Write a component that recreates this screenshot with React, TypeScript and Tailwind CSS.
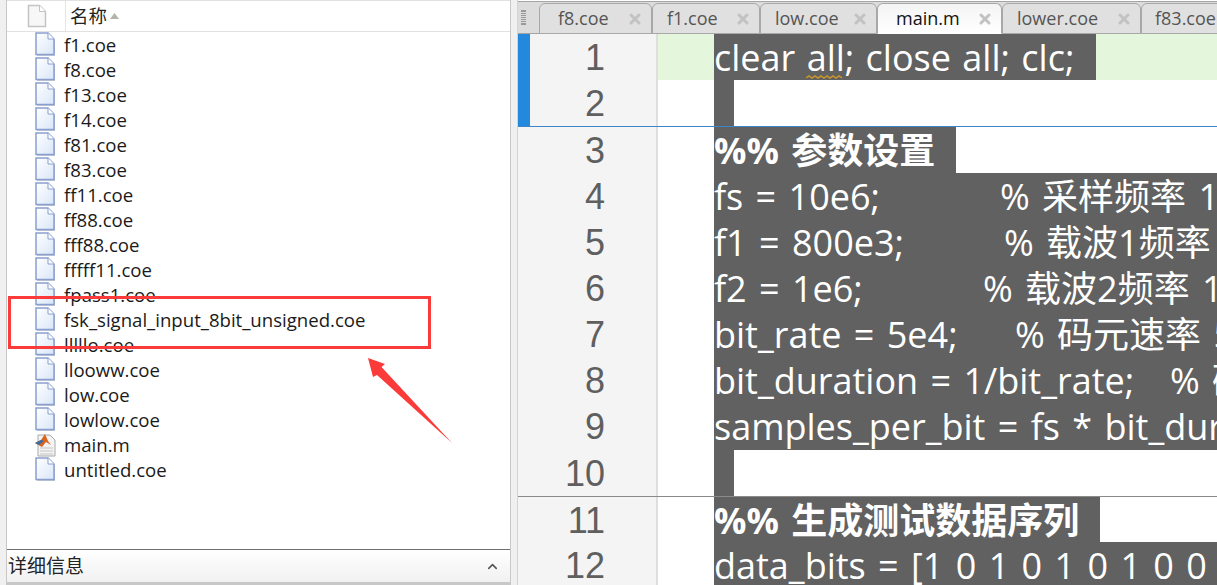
import React from "react";
import { ChevronUp, X } from "lucide-react";

const files = [
  "f1.coe", "f8.coe", "f13.coe", "f14.coe", "f81.coe", "f83.coe", "ff11.coe", "ff88.coe", "fff88.coe",
  "fffff11.coe", "fpass1.coe", "fsk_signal_input_8bit_unsigned.coe", "lllllo.coe", "llooww.coe",
  "low.coe", "lowlow.coe", "main.m", "untitled.coe",
];

const tabs = [
  { name: "f8.coe", width: "w-[113px] pl-[18px]" },
  { name: "f1.coe", width: "w-[108px] pl-[14px]" },
  { name: "low.coe", width: "w-[117px] pl-[14px]" },
  { name: "main.m", width: "w-[125px] pl-[18px]", active: true },
  { name: "lower.coe", width: "w-[139px] pl-[14px]" },
  { name: "f83.coe", width: "w-[120px] pl-[13px]" },
];

const CJK = "font-['Open_Sans','Noto_Sans_CJK_SC',sans-serif]";

function CoeIcon() {
  return (
    <svg width="24" height="25" viewBox="0 0 24 25" className="shrink-0">
      <path d="M3 2h12l6 6v16H3z" fill="#9aa3b8" opacity="0.6" />
      <path d="M2 1h12l6 6v15.500H2z" fill="url(#pg)" stroke="#8a9fd0" strokeWidth="1.500" />
      <path d="M14 1v6h6" fill="#fff" stroke="#8a9fd0" />
      <defs>
        <linearGradient id="pg" x1="0" y1="0" x2="1" y2="1">
          <stop offset="0" stopColor="#ffffff" />
          <stop offset="1" stopColor="#d8e6f8" />
        </linearGradient>
      </defs>
    </svg>
  );
}

function MatlabIcon() {
  return (
    <svg width="24" height="25" viewBox="0 0 24 25" className="shrink-0">
      <path d="M4 3h12l5 5v16H4z" fill="#f4f4f4" stroke="#a8a8a8" />
      <path d="M6 16h13M6 19h13M6 22h13" stroke="#c4c4c4" />
      <path d="M1 11l6-3 4-6 3 7 3 4-5-3-4 5z" fill="#d9641e" />
      <path d="M1 11l6-3 3 1-5 4z" fill="#3a6ea5" />
    </svg>
  );
}

function Explorer() {
  return (
    <div className="w-[505px] h-full flex flex-col bg-white border-x border-[#c8c8c8]">
      <div className="h-[32px] flex items-stretch border-t border-b border-[#e2e2e2] shrink-0">
        <div className="w-[59px] flex items-center justify-end pr-[18px] border-r border-[#e5e5e5]">
          <svg width="20" height="24" viewBox="0 0 20 24">
            <path d="M1.500 1.500h11l6 6v15h-17z" fill="#f7f7f7" stroke="#c4c4c4" strokeWidth="1.500" />
            <path d="M12.500 1.500v6h6" fill="#fff" stroke="#c4c4c4" />
          </svg>
        </div>
        <div className={`flex items-center pl-[4px] gap-[3px] text-[18.500px] text-[#222] ${CJK}`}>
          名称
          <svg width="9" height="6" viewBox="0 0 9 6">
            <path d="M4.500 0L9 6H0z" fill="#b4b4a8" />
          </svg>
        </div>
      </div>
      <div className="flex-1 overflow-hidden">
        {files.map((f) => (
          <div key={f} className="h-[25px] flex items-center pl-[27px] gap-[6px]">
            {f === "main.m" ? <MatlabIcon /> : <CoeIcon />}
            <span className="text-[18.600px] text-[#1a1a1a] font-['Open_Sans',sans-serif]">{f}</span>
          </div>
        ))}
      </div>
      <div className="h-[36px] shrink-0 flex items-center justify-between pl-[1px] pr-[10px] border-t border-[#707070] border-b-[3px] border-b-[#c8c8c8] bg-gradient-to-b from-white to-[#f1f1f1]">
        <span className={`text-[19px] text-[#222] ${CJK}`}>详细信息</span>
        <ChevronUp size={15} strokeWidth={2.5} className="text-[#555]" />
      </div>
    </div>
  );
}

function TabBar() {
  return (
    <div className="h-[33px] mt-[1px] shrink-0 flex items-end bg-[#dcdcdc] border-t border-b border-[#a4a4a4]">
      <div className="w-[21px] h-full flex items-center pl-[3px] shrink-0">
        <div className="w-[5px] h-[15px] border-y border-dotted border-[#999] bg-[repeating-linear-gradient(#999_0_1px,transparent_1px_2px)]" />
      </div>
      {tabs.map((t) => (
        <div
          key={t.name}
          className={`${t.width} h-[31px] -mb-[1px] shrink-0 flex items-center justify-between pr-[8px] rounded-t-[6px] border border-[#a8a8a8] text-[18px] font-['Open_Sans',sans-serif] ${
            t.active ? "bg-gradient-to-b from-[#f4f4f4] to-white border-b-white text-[#111]" : "bg-[#e0e0e0] text-[#555]"
          }`}
        >
          <span>{t.name}</span>
          <X size={16} strokeWidth={4.5} className="text-[#c2c2c2] shrink-0" />
        </div>
      ))}
    </div>
  );
}

type Row = {
  n: number;
  body: React.ReactNode;
  fill?: string;
  mark?: string;
  rule?: string;
};

const rows: Row[] = [
  {
    n: 1,
    mark: "bg-[#2389dc]",
    fill: "bg-[#e4f7dc]",
    body: (
      <span className="w-[382px] bg-[#616161] h-full whitespace-pre [word-spacing:2px]">
        clear{" "}
        <span className="relative">
          all
          <svg width="38" height="5" viewBox="0 0 38 5" className="absolute left-[-1px] bottom-[2px]">
            <path d="M0 3l3-2 3 2 3-2 3 2 3-2 3 2 3-2 3 2 3-2 3 2 3-2 3 2" fill="none" stroke="#c8962a" strokeWidth="1.500" />
          </svg>
        </span>
        ; close all; clc;
      </span>
    ),
  },
  { n: 2, mark: "bg-[#2389dc]", body: <span className="w-[20px] bg-[#616161] h-full" /> },
  {
    n: 3,
    rule: "border-[#3d85c6]",
    body: <span className="w-[242px] bg-[#616161] h-full font-bold">%% 参数设置</span>,
  },
  {
    n: 4,
    body: (
      <div className="flex-1 bg-[#616161] h-full flex whitespace-pre">
        <span className="w-[286px] shrink-0">fs = 10e6;</span>% 采样频率 10MHz
      </div>
    ),
  },
  {
    n: 5,
    body: (
      <div className="flex-1 bg-[#616161] h-full flex whitespace-pre">
        <span className="w-[290px] shrink-0">f1 = 800e3;</span>% 载波1频率 800kHz
      </div>
    ),
  },
  {
    n: 6,
    body: (
      <div className="flex-1 bg-[#616161] h-full flex whitespace-pre">
        <span className="w-[269px] shrink-0">f2 = 1e6;</span>% 载波2频率 1MHz
      </div>
    ),
  },
  {
    n: 7,
    body: (
      <div className="flex-1 bg-[#616161] h-full flex whitespace-pre">
        <span className="w-[301px] shrink-0">bit_rate = 5e4;</span>% 码元速率 50kbps
      </div>
    ),
  },
  {
    n: 8,
    body: (
      <div className="flex-1 bg-[#616161] h-full flex whitespace-pre">
        <span className="w-[456px] shrink-0">bit_duration = 1/bit_rate;</span>% 码元持续时间
      </div>
    ),
  },
  { n: 9, body: <div className="flex-1 bg-[#616161] h-full whitespace-pre">samples_per_bit = fs * bit_duration;</div> },
  { n: 10, body: <span className="w-[20px] bg-[#616161] h-full" /> },
  {
    n: 11,
    rule: "border-[#8a8a8a]",
    body: <span className="w-[386px] bg-[#616161] h-full font-bold">%% 生成测试数据序列</span>,
  },
  { n: 12, body: <div className="flex-1 bg-[#616161] h-full whitespace-pre">data_bits = [1 0 1 0 1 0 1 0 0 1 1 0 1 0 1 0];</div> },
];

function Editor() {
  return (
    <div className="flex-1 min-w-0 h-full flex flex-col bg-white overflow-hidden">
      <TabBar />
      <div className={`flex-1 overflow-hidden text-white text-[36px] leading-[48px] [word-spacing:3px] ${CJK}`}>
        {rows.map((r) => (
          <div key={r.n} className={`h-[46.180px] flex ${r.fill ?? "bg-white"} ${r.rule ? `border-t ${r.rule}` : ""}`}>
            <div className="w-[140px] shrink-0 flex bg-[#f4f4f4] border-r-2 border-[#dedede]">
              <div className={`w-[12px] shrink-0 ${r.mark ?? ""}`} />
              <div className="w-[75px] text-right text-[#5f5f5f] font-['Liberation_Sans',sans-serif]">{r.n}</div>
            </div>
            <div className="w-[56px] shrink-0" />
            <div className="flex-1 min-w-0 flex">{r.body}</div>
          </div>
        ))}
      </div>
    </div>
  );
}

export default function App() {
  return (
    <div className="relative w-[1217px] h-[585px] flex bg-[#f0f0f0] overflow-hidden pl-[6px]">
      <Explorer />
      <div className="w-[7px] shrink-0 border-r border-[#d4d4d4]" />
      <Editor />
      {/* red annotation over the list */}
      <div className="absolute left-[8px] top-[296px] w-[423px] h-[53px] border-[3px] border-[#fb3a3a]" />
      <svg className="absolute left-[360px] top-[350px]" width="100" height="100" viewBox="0 0 100 100">
        <path d="M8 8L25 14 L21.500 17 L92 93 L17 25 L13 27Z" fill="#fb3a3a" />
      </svg>
    </div>
  );
}
